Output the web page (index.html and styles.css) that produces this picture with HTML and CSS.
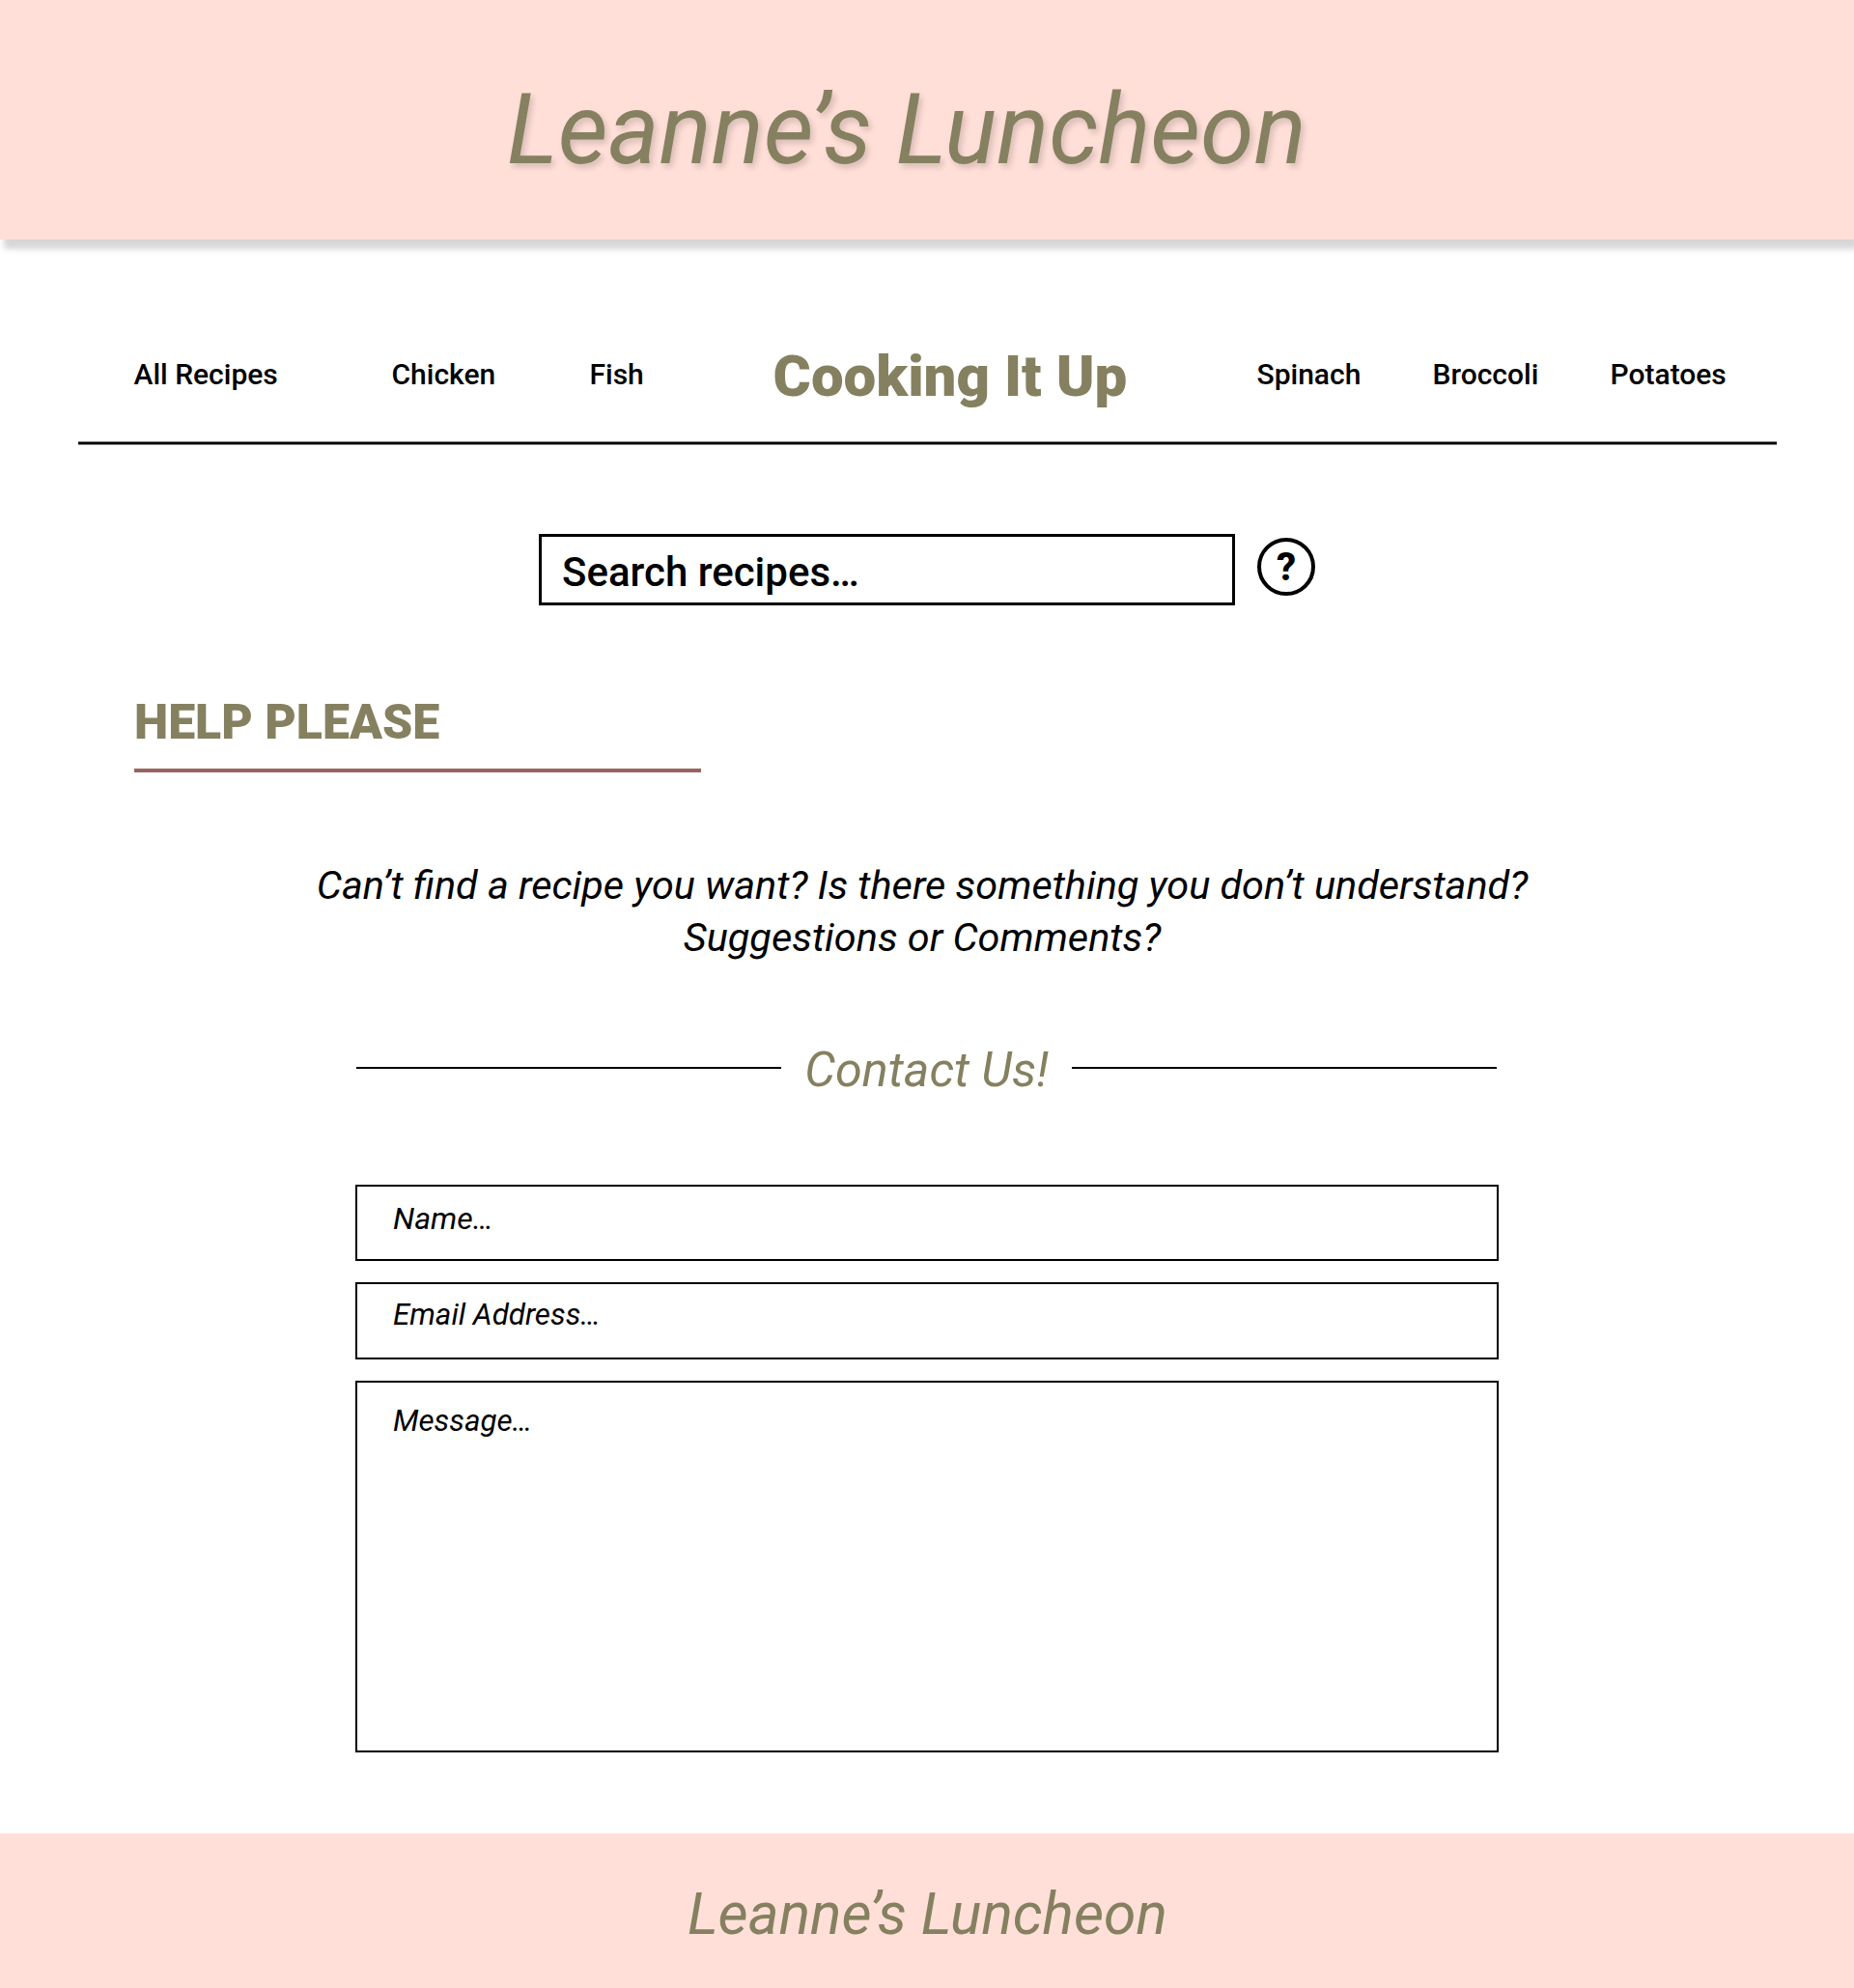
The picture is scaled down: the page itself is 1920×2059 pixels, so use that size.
FILE: index.html
```html
<!DOCTYPE html>
<html lang="en">
<head>
<meta charset="utf-8">
<title>Leanne’s Luncheon</title>
<link rel="stylesheet" href="styles.css">
</head>
<body>
<header class="banner"><h1 class="banner-title">Leanne’s Luncheon</h1></header>
<nav class="nav">
  <a class="nav-link">All Recipes</a>
  <a class="nav-link">Chicken</a>
  <a class="nav-link">Fish</a>
  <span class="nav-brand">Cooking It Up</span>
  <a class="nav-link">Spinach</a>
  <a class="nav-link">Broccoli</a>
  <a class="nav-link">Potatoes</a>
</nav>
<div class="nav-rule"></div>
<main>
  <div class="search">
    <div class="search-box">Search recipes…</div>
    <div class="help-button">?</div>
  </div>
  <h2 class="section-title">HELP PLEASE</h2>
  <p class="intro">Can’t find a recipe you want? Is there something you don’t understand?<br>Suggestions or Comments?</p>
  <div class="contact-heading">
    <span class="contact-rule"></span>
    <h3 class="contact-title">Contact Us!</h3>
    <span class="contact-rule"></span>
  </div>
  <div class="form">
    <div class="field field-name">Name…</div>
    <div class="field field-email">Email Address…</div>
    <div class="field field-message">Message…</div>
  </div>
</main>
<footer class="footer">Leanne’s Luncheon</footer>
</body>
</html>
```
FILE: styles.css
```css
* { box-sizing: border-box; }
body {
  margin: 0;
  background: #fff;
  color: #000;
  font-family: Roboto, sans-serif;
  overflow-x: hidden;
}
h1, h2, h3, p { margin: 0; }

.banner {
  height: 248px;
  padding: 76px 0 0 525px;
  background: #ffdfd8;
  box-shadow: 4px 10px 6px rgba(0, 0, 0, 0.16);
}
.banner-title {
  font-size: 100.8px;
  font-style: italic;
  font-weight: 400;
  line-height: 117px;
  color: #85805f;
  text-shadow: 3px 4px 6px rgba(0, 0, 0, 0.16);
}

.nav {
  display: grid;
  grid-template-columns: 267px 205px 190px 501px 182px 184px auto;
  align-items: start;
  height: 103px;
  margin-top: 106px;
  padding-left: 138.5px;
}
.nav-link {
  padding-top: 16px;
  font-size: 30px;
  font-weight: 500;
  line-height: 35px;
}
.nav-brand {
  font-size: 60px;
  font-weight: 900;
  line-height: 71px;
  color: #85805f;
}
.nav-rule {
  height: 4px;
  margin: 0 80px 0 81px;
  border: solid #7f8480;
  border-width: 1px 0;
  background: #000;
}

.search {
  display: flex;
  align-items: flex-start;
  gap: 23px;
  margin-top: 92px;
  padding-left: 558px;
}
.search-box {
  width: 721px;
  height: 74px;
  padding: 12px 21px 0;
  border: 3px solid #000;
  font-size: 42px;
  font-weight: 500;
  line-height: 49px;
}
.help-button {
  width: 60px;
  height: 60px;
  margin-top: 4px;
  border: 4px solid #000;
  border-radius: 50%;
  font-size: 40px;
  font-weight: 800;
  line-height: 53px;
  text-align: center;
}

.section-title {
  width: 587px;
  height: 81px;
  margin: 92px 0 0 139px;
  border-bottom: 4px solid #98645f;
  font-size: 50px;
  font-weight: 900;
  line-height: 58px;
  color: #85805f;
}
.intro {
  margin-top: 90px;
  padding-right: 10px;
  font-size: 41.4px;
  font-style: italic;
  line-height: 54px;
  text-align: center;
}

.contact-heading {
  display: flex;
  align-items: center;
  justify-content: space-between;
  width: 1181px;
  margin: 81px 0 0 369px;
}
.contact-rule {
  width: 440px;
  height: 2px;
  margin-bottom: 4px;
  background: #000;
}
.contact-title {
  font-size: 50.4px;
  font-style: italic;
  font-weight: 400;
  line-height: 58px;
  color: #85805f;
}

.form {
  display: flex;
  flex-direction: column;
  gap: 22px;
  width: 1184px;
  margin: 90px 0 84px 368px;
}
.field {
  border: 2px solid #000;
  padding-left: 37px;
  font-size: 31.3px;
  font-style: italic;
  line-height: 37px;
}
.field-name { height: 79px; padding-top: 14px; font-size: 32px; line-height: 38px; }
.field-email { height: 80px; padding-top: 13px; }
.field-message { height: 385px; padding-top: 21px; }

.footer {
  height: 160px;
  padding: 48px 0 0 712px;
  background: #ffdfd8;
  font-size: 60.5px;
  font-style: italic;
  line-height: 71px;
  color: #85805f;
}
```
